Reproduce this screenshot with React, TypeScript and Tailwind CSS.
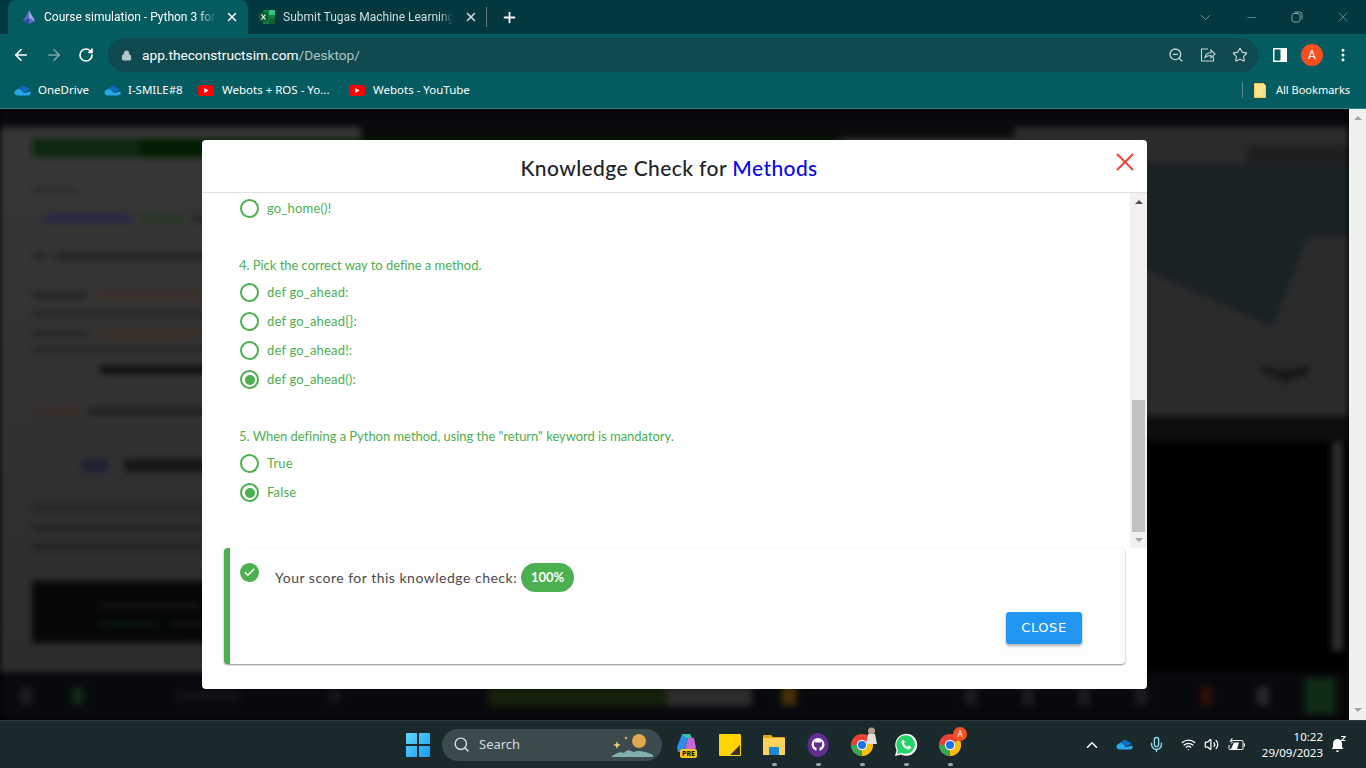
import { ArrowLeft, ArrowRight, RotateCw, Lock, ZoomOut, Star, X, Plus, ChevronDown, Minus, ChevronUp, Mic, Wifi, Volume2, Search, MoreVertical, Check } from "lucide-react";

const chromeFont = "font-['Roboto',sans-serif]";
const barFont = "font-['Noto_Sans',sans-serif]";
const uiFont = "font-['Lato','Noto_Sans',sans-serif]";

function Cloud({ w = 17 }: { w?: number }) {
  return (
    <svg width={w} height={(w * 11) / 17} viewBox="0 0 17 11" className="shrink-0">
      <path d="M6 2.5C7.5.3 10.5.3 11.8 2.6c2-.4 3.6 1 3.6 3L6 8 3 5c.5-1.500 1.700-2.500 3-2.500z" fill="#0f6cbd" />
      <path d="M3.500 4.500C5 3.800 6.300 4.300 7 5.500l3 2.500 6.500-1.500c.7 2-.5 4-2.500 4H3.500C1.500 10.500.3 9 .5 7.500.7 5.800 2 4.700 3.500 4.500z" fill="#28a8ea" />
    </svg>
  );
}

function YouTube() {
  return (
    <svg width="16" height="11" viewBox="0 0 16 11" className="shrink-0 mr-[1px]">
      <rect width="16" height="11" rx="3" fill="#f00" />
      <path d="M6.300 3l4.200 2.500-4.200 2.500z" fill="#fff" />
    </svg>
  );
}

function Bookmark({ icon, label, width }: { icon: React.ReactNode; label: string; width: string }) {
  return (
    <div className={`flex items-center gap-[7px] ${width}`}>
      {icon}
      <span className={`${barFont} text-[11.5px] text-white whitespace-nowrap`}>{label}</span>
    </div>
  );
}

function TopBars() {
  return (
    <div className={`${chromeFont} shrink-0`}>
      <div className="h-[34px] bg-[#03393e] flex items-end">
        <div className="w-[8px]" />
        <div className="w-[240px] h-[34px] bg-[#045c60] rounded-t-[8px] flex items-center pl-[13px] pr-[9px]">
          <svg width="16" height="16" viewBox="0 0 16 16" className="shrink-0">
            <path d="M8 1.500L14 12 8 15 2 12z" fill="#5c6bc0" />
            <path d="M8 1.500L14 12 8 9z" fill="#9fa8da" />
            <path d="M2 12l6-3v6z" fill="#3949ab" />
          </svg>
          <span className="ml-[7px] text-[12px] text-white whitespace-nowrap w-[173px] [mask-image:linear-gradient(to_right,black_88%,transparent)]">Course simulation - Python 3 for</span>
          <X size={14} strokeWidth={2.5} className="ml-auto text-white" />
        </div>
        <div className="w-[238px] h-[34px] flex items-center pl-[11px] pr-[8px]">
          <svg width="16" height="16" viewBox="0 0 16 16" className="shrink-0">
            <rect x="4" y="1" width="12" height="14" rx="1" fill="#107c41" />
            <rect x="10" y="1" width="6" height="5" fill="#33c481" />
            <rect x="10" y="10" width="6" height="5" fill="#185c37" />
            <rect x="0" y="3.500" width="9" height="9" rx="1" fill="#0b5d30" />
            <path d="M2.500 5.500l4 5M6.500 5.500l-4 5" stroke="#fff" strokeWidth="1.200" />
          </svg>
          <span className="ml-[8px] text-[12px] text-[#d2dedf] whitespace-nowrap w-[170px] [mask-image:linear-gradient(to_right,black_92%,transparent)]">Submit Tugas Machine Learning</span>
          <X size={14} strokeWidth={2.5} className="ml-auto text-[#d2dedf]" />
        </div>
        <div className="w-px h-[20px] bg-[#5d7f82] mb-[7px]" />
        <Plus size={17} strokeWidth={2.5} className="text-white ml-[14px] mb-[8px]" />
        <div className="ml-auto h-[34px] flex items-center text-[#7fa1a3] pr-[15px]">
          <ChevronDown size={17} strokeWidth={1.200} />
          <Minus size={13} strokeWidth={1.200} className="ml-[31px]" />
          <svg width="12" height="12" viewBox="0 0 12 12" fill="none" stroke="currentColor" className="ml-[33px]">
            <rect x="1" y="2.500" width="8" height="8.500" rx="2" />
            <path d="M3.500 1h5a2.500 2.500 0 012.500 2.500v5" />
          </svg>
          <X size={16} strokeWidth={1.100} className="ml-[32px]" />
        </div>
      </div>
      <div className="h-[38px] bg-[#045c60] flex items-center pt-[4px]">
        <ArrowLeft size={18} strokeWidth={2.200} className="text-white ml-[12px]" />
        <ArrowRight size={18} strokeWidth={2.200} className="text-[#7aa5a7] ml-[15px]" />
        <RotateCw size={16} strokeWidth={2.500} className="text-white ml-[15px]" />
        <div className="ml-[14px] w-[1150px] h-[34px] rounded-full bg-[#0e4a50] flex items-center pl-[13px] pr-[10px]">
          <Lock size={11} fill="#b5c7c9" className="text-[#b5c7c9]" />
          <span className="ml-[10px] text-[13.7px] text-white whitespace-nowrap">app.theconstructsim.com<span className="text-[#b0c4c6]">/Desktop/</span></span>
          <ZoomOut size={16} className="ml-auto text-[#c8d5d6]" />
          <svg width="16" height="16" viewBox="0 0 16 16" fill="none" stroke="#c8d5d6" strokeWidth="1.100" className="ml-[16px]">
            <path d="M8 2H1.500v12h12V9.500" />
            <path d="M5 10.500c.5-3 3-4.800 6-4.800V3l4 4-4 3.800V8.500c-2.500 0-4.500.500-6 2z" />
          </svg>
          <Star size={16} strokeWidth={1.700} className="ml-[16px] text-[#c8d5d6]" />
        </div>
        <svg width="14" height="14" viewBox="0 0 14 14" className="ml-[15px]">
          <rect width="14" height="14" fill="#fff" />
          <rect x="1.500" y="1.500" width="6" height="11" fill="#045c60" />
        </svg>
        <div className="ml-[14px] w-[22px] h-[22px] rounded-full bg-[#f4511e] flex items-center justify-center text-white text-[12px]">A</div>
        <MoreVertical size={16} strokeWidth={2.500} className="ml-[12px] text-white" />
      </div>
      <div className="h-[36px] bg-[#045c60] flex items-center pl-[14px] pr-[14px]">
        <Bookmark width="w-[90px]" icon={<Cloud />} label="OneDrive" />
        <Bookmark width="w-[94px]" icon={<Cloud />} label="I-SMILE#8" />
        <Bookmark width="w-[151px]" icon={<YouTube />} label="Webots + ROS - Yo..." />
        <Bookmark width="w-[150px]" icon={<YouTube />} label="Webots - YouTube" />
        <div className="ml-auto w-px h-[16px] bg-[#5d8a8c]" />
        <svg width="12" height="15" viewBox="0 0 12 15" className="ml-[11px]">
          <path d="M.5.5h9l2 2v12H.5z" fill="#fde293" stroke="#f9c846" />
        </svg>
        <span className={`${barFont} ml-[10px] w-[76px] text-[11px] text-white whitespace-nowrap`}>All Bookmarks</span>
      </div>
      <div className="h-px bg-[#2b8488]" />
    </div>
  );
}

function Bar({ w, c = "bg-[#1c1c1c]", h = "h-[7px]", ml = "" }: { w: string; c?: string; h?: string; ml?: string }) {
  return <div className={`${w} ${h} ${c} ${ml} shrink-0`} />;
}

function Backdrop() {
  return (
    <div className="absolute inset-0 flex flex-col bg-[#2f2f2f] blur-[3px] overflow-hidden">
      <div className="h-[18px] bg-[#07090d] shrink-0" />
      <div className="h-[545px] flex shrink-0">
        <div className="w-[1014px] flex flex-col shrink-0">
          <div className="h-[12px] flex shrink-0">
            <div className="w-[361px] bg-[#353535]" />
            <div className="flex-1 bg-[#0a0a0a]" />
          </div>
          <div className="flex-1 pl-[32px] flex flex-col bg-linear-to-b from-[#373737] to-[#2d2d2d]">
            <div className="flex shrink-0">
              <Bar w="w-[108px]" c="bg-[#0c280e]" h="h-[18px]" />
              <Bar w="w-[700px]" c="bg-[#011d01]" h="h-[18px]" />
            </div>
            <Bar w="w-[45px]" c="bg-[#2a2a2a]" h="h-[5px]" ml="mt-[31px]" />
            <div className="flex mt-[22px] ml-[11px] gap-[8px]"><Bar w="w-[88px]" c="bg-[#25254a]" /><Bar w="w-[45px]" c="bg-[#263626]" /><Bar w="w-[30px]" c="bg-[#262626]" /></div>
            <div className="flex mt-[31px] gap-[8px]"><Bar w="w-[15px]" c="bg-[#272727]" /><Bar w="w-[300px]" c="bg-[#232323]" /></div>
            <div className="flex mt-[32px] gap-[8px]"><Bar w="w-[55px]" c="bg-[#262626]" /><Bar w="w-[110px]" c="bg-[#3d2e28]" /></div>
            <div className="flex mt-[11px]"><Bar w="w-[300px]" c="bg-[#282828]" /></div>
            <div className="flex mt-[13px] gap-[8px]"><Bar w="w-[55px]" c="bg-[#262626]" /><Bar w="w-[110px]" c="bg-[#3d2e28]" /></div>
            <div className="flex mt-[10px]"><Bar w="w-[300px]" c="bg-[#282828]" /></div>
            <div className="flex mt-[11px] ml-[68px]"><Bar w="w-[300px]" c="bg-[#111111]" h="h-[9px]" /></div>
            <div className="flex mt-[34px] gap-[6px]"><Bar w="w-[50px]" c="bg-[#3a2c26]" /><Bar w="w-[300px]" c="bg-[#1e1e1e]" /></div>
            <div className="flex mt-[44px] ml-[50px] items-center gap-[16px]"><Bar w="w-[26px]" c="bg-[#1c2233]" h="h-[13px]" /><Bar w="w-[200px]" c="bg-[#161616]" h="h-[13px]" /></div>
            <Bar w="w-[500px]" c="bg-[#242424]" h="h-[6px]" ml="mt-[33px]" />
            <Bar w="w-[500px]" c="bg-[#222222]" h="h-[6px]" ml="mt-[14px]" />
            <Bar w="w-[500px]" c="bg-[#212121]" h="h-[6px]" ml="mt-[13px]" />
            <div className="w-[950px] h-[62px] mt-[31px] bg-[#050607] flex flex-col pl-[68px] pt-[22px] gap-[14px] shrink-0">
              <Bar w="w-[100px]" c="bg-[#151515]" h="h-[5px]" />
              <div className="flex gap-[12px]"><Bar w="w-[60px]" c="bg-[#0a1810]" h="h-[5px]" /><Bar w="w-[70px]" c="bg-[#121714]" h="h-[5px]" /></div>
            </div>
          </div>
        </div>
        <div className="flex-1 flex flex-col min-w-0">
          <div className="h-[36px] bg-[#2b2b2b] flex justify-end items-end shrink-0"><Bar w="w-[102px]" c="bg-[#1f1f1f]" h="h-[18px]" /></div>
          <div className="h-[253px] bg-[#2a2a2a] shrink-0">
            <svg viewBox="0 0 335 253" className="w-full h-full" preserveAspectRatio="none">
              <polygon points="0,0 335,0 335,74 293,74 259,164 136,109 0,50" fill="#1a2225" />
              <path d="M246 203l22 5 28-5-4 10-14 2-6 6-6-6-16-4z" fill="#151515" />
            </svg>
          </div>
          <div className="h-[25px] bg-[#0e0e0e] shrink-0" />
          <div className="flex-1 bg-black flex justify-end pr-[6px] pt-[1px] pb-[21px]"><div className="w-[11px] bg-[#2e2e2e]" /></div>
        </div>
      </div>
      <div className="h-[48px] bg-[#07090d] shrink-0 flex items-center pl-[20px]">
        <Bar w="w-[12px]" c="bg-[#1a1c20]" h="h-[18px]" />
        <Bar w="w-[12px]" c="bg-[#0f2a12]" h="h-[18px]" ml="ml-[40px]" />
        <Bar w="w-[65px]" c="bg-[#131417]" h="h-[8px]" ml="ml-[91px]" />
        <Bar w="w-[10px]" c="bg-[#15161a]" h="h-[14px]" ml="ml-[90px]" />
        <Bar w="w-[178px]" c="bg-[#152109]" h="h-[19px]" ml="ml-[148px]" />
        <Bar w="w-[86px]" c="bg-[#2c2c2c]" h="h-[19px]" />
        <Bar w="w-[14px]" c="bg-[#4a3208]" h="h-[18px]" ml="ml-[30px]" />
        <Bar w="w-[12px]" c="bg-[#1a1c20]" h="h-[18px]" ml="ml-[169px]" />
        <Bar w="w-[12px]" c="bg-[#1a1c20]" h="h-[18px]" ml="ml-[45px]" />
        <Bar w="w-[12px]" c="bg-[#1a1c20]" h="h-[18px]" ml="ml-[44px]" />
        <Bar w="w-[12px]" c="bg-[#1a1c20]" h="h-[18px]" ml="ml-[45px]" />
        <Bar w="w-[12px]" c="bg-[#300c0c]" h="h-[20px]" ml="ml-[53px]" />
        <Bar w="w-[12px]" c="bg-[#25272a]" h="h-[18px]" ml="ml-[45px]" />
        <Bar w="w-[30px]" c="bg-[#112c16]" h="h-[36px]" ml="ml-[36px]" />
      </div>
    </div>
  );
}

function Radio({ on, label }: { on?: boolean; label: string }) {
  return (
    <div className="h-[29px] flex items-center pl-[1px]">
      <span className="w-[19px] h-[19px] rounded-full border-2 border-[#4caf50] flex items-center justify-center shrink-0">
        {on && <span className="w-[10px] h-[10px] rounded-full bg-[#4caf50]" />}
      </span>
      <span className="ml-[8px] text-[13px] tracking-[0.18px] text-[#4caf50]">{label}</span>
    </div>
  );
}

function Modal() {
  return (
    <div className={`${uiFont} w-[945px] h-[549px] bg-white rounded-[4px] flex flex-col`}>
      <div className="h-[53px] shrink-0 border-b border-[#e0e0e0] flex items-center justify-center pr-[11px] relative">
        <h2 className="text-[21px] font-medium text-[#222326] tracking-[0.4px] mt-[3px]">
          Knowledge Check for <span className="text-[#0a0ae6]">Methods</span>
        </h2>
        <X size={30} strokeWidth={1.6} className="absolute right-[7px] top-[7px] text-[#f44336]" />
      </div>
      <div className="h-[355px] flex shrink-0">
        <div className="flex-1 pl-[37px] flex flex-col">
          <div className="mt-[1px]"><Radio label="go_home()!" /></div>
          <p className="mt-[32px] h-[20px] leading-[20px] text-[13px] tracking-[-0.04px] text-[#4caf50]">4. Pick the correct way to define a method.</p>
          <div className="mt-[3px]">
            <Radio label="def go_ahead:" />
            <Radio label="def go_ahead{}:" />
            <Radio label="def go_ahead!:" />
            <Radio on label="def go_ahead():" />
          </div>
          <p className="mt-[32px] h-[20px] leading-[20px] text-[13px] tracking-[-0.04px] text-[#4caf50]">5. When defining a Python method, using the "return" keyword is mandatory.</p>
          <div className="mt-[3px]">
            <Radio label="True" />
            <Radio on label="False" />
          </div>
        </div>
        <div className="w-[17px] bg-[#f1f1f1] flex flex-col items-center">
          <span className="mt-[7px] w-0 h-0 border-x-[4px] border-x-transparent border-b-[4px] border-b-[#505050]" />
          <div className="mt-[196px] w-[13px] h-[132px] bg-[#c1c1c1]" />
          <span className="mt-[6px] w-0 h-0 border-x-[4px] border-x-transparent border-t-[4px] border-t-[#a3a3a3]" />
        </div>
      </div>
      <div className="mx-[22px] h-[116px] rounded-[4px] border-l-[6px] border-[#4caf50] bg-[#fdfdfd] shadow-[0_1px_2px_rgba(0,0,0,0.45)] flex flex-col shrink-0">
        <div className="flex items-start pl-[10px] pt-[15px]">
          <span className="w-[19px] h-[19px] rounded-full bg-[#4caf50] flex items-center justify-center shrink-0">
            <Check size={13} strokeWidth={3} className="text-white" />
          </span>
          <span className="ml-[16px] mt-[4px] text-[14px] tracking-[0.5px] text-[#4a4a4a] whitespace-nowrap">Your score for this knowledge check:</span>
          <span className="ml-[4px] w-[53px] h-[29px] rounded-full bg-[#4caf50] text-white text-[13px] font-bold flex items-center justify-center">100%</span>
        </div>
        <div className="flex justify-end pr-[43px] mt-[20px]">
          <button className="w-[76px] h-[32px] rounded-[3px] bg-[#2196f3] text-white text-[13px] tracking-[0.6px] font-['DejaVu_Sans',sans-serif] shadow-[0_2px_3px_rgba(0,0,0,0.3)]">CLOSE</button>
        </div>
      </div>
    </div>
  );
}

function Main() {
  return (
    <div className="flex-1 min-h-0 flex">
      <div className="flex-1 relative overflow-hidden">
        <Backdrop />
        <div className="absolute inset-0 flex justify-center pt-[31px]"><Modal /></div>
      </div>
      <div className="w-[17px] bg-[#f0f0f0] flex flex-col items-center justify-between pt-[7px] pb-[8px] shrink-0">
        <span className="w-0 h-0 border-x-[4px] border-x-transparent border-b-[4px] border-b-[#a3a3a3]" />
        <span className="w-0 h-0 border-x-[4px] border-x-transparent border-t-[4px] border-t-[#a3a3a3]" />
      </div>
    </div>
  );
}

function Pip({ children, dot }: { children: React.ReactNode; dot?: boolean }) {
  return (
    <div className="w-[44px] h-[48px] flex flex-col items-center relative">
      <div className="h-[48px] flex items-center justify-center">{children}</div>
      {dot && <span className="absolute bottom-[3px] w-[5px] h-[3px] rounded-full bg-[#9aa3a5]" />}
    </div>
  );
}

function ChromeIcon({ size = 24 }: { size?: number }) {
  return (
    <svg width={size} height={size} viewBox="0 0 24 24">
      <circle cx="12" cy="12" r="11" fill="#ea4335" />
      <path d="M12 12L2.500 17.500A11 11 0 0 0 12 23z" fill="#34a853" />
      <path d="M1 12a11 11 0 0 0 1.500 5.500L12 12z" fill="#34a853" />
      <path d="M12 12v11A11 11 0 0 0 23 12c0-1.900-.5-3.800-1.500-5.500L12 12z" fill="#fbbc04" />
      <circle cx="12" cy="12" r="5.200" fill="#fff" />
      <circle cx="12" cy="12" r="4.100" fill="#1a73e8" />
    </svg>
  );
}

function Taskbar() {
  return (
    <div className={`${barFont} h-[48px] bg-[#19292c] border-t border-[#2d3a3c] flex items-center shrink-0`}>
      <div className="ml-[406px]">
        <svg width="24" height="24" viewBox="0 0 24 24" className="block">
          <defs>
            <linearGradient id="win" x1="0" y1="0" x2="1" y2="1"><stop offset="0" stopColor="#5fd8f8" /><stop offset="1" stopColor="#1a9af0" /></linearGradient>
          </defs>
          <path d="M1 0h10v11H0V1a1 1 0 011-1zM13 0h10a1 1 0 011 1v10H13zM0 13h11v11H1a1 1 0 01-1-1zM13 13h11v10a1 1 0 01-1 1H13z" fill="url(#win)" />
        </svg>
      </div>
      <div className="ml-[12px] w-[220px] h-[32px] rounded-full bg-[#3a4a4d] flex items-center pl-[11px] pr-[8px]">
        <Search size={17} className="text-[#d8e0e1]" />
        <span className="ml-[9px] text-[13px] text-[#d4dcdd]">Search</span>
        <svg width="42" height="26" viewBox="0 0 42 26" className="ml-auto">
          <circle cx="27" cy="9" r="7" fill="#e0a94e" />
          <path d="M0 24c5-3 8-5 12-3 3-4 6-3 9-1 5-2 12-1 20 3v2H0z" fill="#7fb0ad" />
          <path d="M5 9l1 3 3 1-3 1-1 3-1-3-3-1 3-1zM14 4l.5 1.500L16 6l-1.500.5L14 8l-.5-1.500L12 6l1.500-.5z" fill="#f5d76e" />
        </svg>
      </div>
      <div className="ml-[2px] flex">
        <Pip>
          <div className="relative w-[24px] h-[26px]">
            <svg width="24" height="22" viewBox="0 0 24 22">
              <path d="M3 15L8 2h7L10 20H4z" fill="#2b8ee8" />
              <path d="M14 6h6l2 10-5 4h-7z" fill="#c869d8" />
              <path d="M8 2h8l2 4h-6z" fill="#33c8a8" />
            </svg>
            <span className="absolute right-[1px] bottom-0 h-[9px] w-[17px] bg-[#f5c518] rounded-[2px] text-[7px] leading-[9px] font-bold text-black text-center">PRE</span>
          </div>
        </Pip>
        <Pip>
          <svg width="22" height="22" viewBox="0 0 22 22">
            <rect width="22" height="22" rx="1" fill="#ffd400" />
            <path d="M21 11v10H11z" fill="#3a3320" />
          </svg>
        </Pip>
        <Pip dot>
          <svg width="24" height="22" viewBox="0 0 24 22">
            <path d="M1 2a1 1 0 011-1h7l2 2h11a1 1 0 011 1v16a1 1 0 01-1 1H2a1 1 0 01-1-1z" fill="#e8a317" />
            <rect x="1" y="4" width="22" height="17" rx="1" fill="#fcd25a" />
            <rect x="7" y="13" width="10" height="8" rx="1" fill="#1488d8" />
          </svg>
        </Pip>
        <Pip dot>
          <svg width="22" height="24" viewBox="0 0 22 24">
            <ellipse cx="11" cy="12" rx="10.500" ry="12" fill="#5e2e91" />
            <circle cx="11" cy="11.500" r="6.500" fill="#fff" />
            <path d="M7 8l1 1.500h6L15 8v4c0 2-1.500 3-4 3s-4-1-4-3zM9.500 15h3v3h-3z" fill="#5e2e91" />
          </svg>
        </Pip>
        <Pip dot>
          <div className="relative">
            <ChromeIcon />
            <svg width="11" height="17" viewBox="0 0 11 17" className="absolute -top-[6px] -right-[3px]">
              <circle cx="5.500" cy="4" r="3.500" fill="#b8a08f" />
              <path d="M2 7h7l2 10H0z" fill="#e8e0da" />
            </svg>
          </div>
        </Pip>
        <Pip dot>
          <svg width="24" height="24" viewBox="0 0 24 24">
            <path d="M1 23l1.600-6A11 11 0 1 1 7 21.400z" fill="#fff" />
            <path d="M2.800 21.200l1.200-4.300A9.300 9.300 0 1 1 7.300 19.800z" fill="#25d366" />
            <path d="M8.500 7c.5-.5 1.300-.3 1.500.3l.7 1.600c.1.400 0 .7-.2 1l-.6.700c.8 1.500 2 2.600 3.500 3.300l.8-.8c.3-.3.600-.3 1-.2l1.500.8c.5.200.6.900.3 1.400-.7 1.200-2 1.700-3.300 1.300-3-1-5.400-3.200-6.300-6.300-.3-1.100.2-2.300 1.100-3.100z" fill="#fff" />
          </svg>
        </Pip>
        <Pip dot>
          <div className="relative">
            <ChromeIcon />
            <span className="absolute -top-[6px] -right-[5px] w-[14px] h-[14px] rounded-full bg-[#f4511e] text-white text-[8px] leading-[14px] text-center">A</span>
          </div>
        </Pip>
      </div>
      <div className="ml-auto flex items-center pr-[20px] text-white">
        <ChevronUp size={18} strokeWidth={2} />
        <div className="ml-[15px]"><Cloud w={17} /></div>
        <Mic size={17} className="ml-[15px] text-[#8fd8ea]" />
        <Wifi size={15} className="ml-[16px]" />
        <Volume2 size={15} className="ml-[8px]" />
        <svg width="17" height="14" viewBox="0 0 17 14" className="ml-[9px]" fill="none" stroke="#fff">
          <path d="M3.500 2.500H14a1 1 0 011 1v7a1 1 0 01-1 1H2a1 1 0 01-1-1V7" />
          <path d="M16.500 5.500v3" strokeWidth="1.200" />
          <path d="M3 11h6l2-6.500H6z" fill="#fff" stroke="none" />
          <path d="M3.500 0L1 4h2.500L2 7.500 6 3.500H3.800L5 0z" fill="#fff" stroke="#19292c" strokeWidth=".5" />
        </svg>
        <div className="ml-[17px] flex flex-col items-end text-[11.500px] leading-[16px]">
          <span>10:22</span>
          <span>29/09/2023</span>
        </div>
        <svg width="15" height="17" viewBox="0 0 15 17" className="ml-[8px]" fill="#fff">
          <path d="M6.500 3a4.500 4.500 0 014.500 4.500V11l1.500 2H.5L2 11V7.500A4.500 4.500 0 016.500 3zM5 14.500h3a1.500 1.500 0 01-3 0z" />
          <path d="M10 .5h4.500L10.500 4.500H14.500" fill="none" stroke="#fff" strokeWidth="1.100" />
        </svg>
      </div>
    </div>
  );
}

export default function App() {
  return (
    <div className="w-[1366px] h-[768px] flex flex-col overflow-hidden bg-black">
      <TopBars />
      <Main />
      <Taskbar />
    </div>
  );
}
